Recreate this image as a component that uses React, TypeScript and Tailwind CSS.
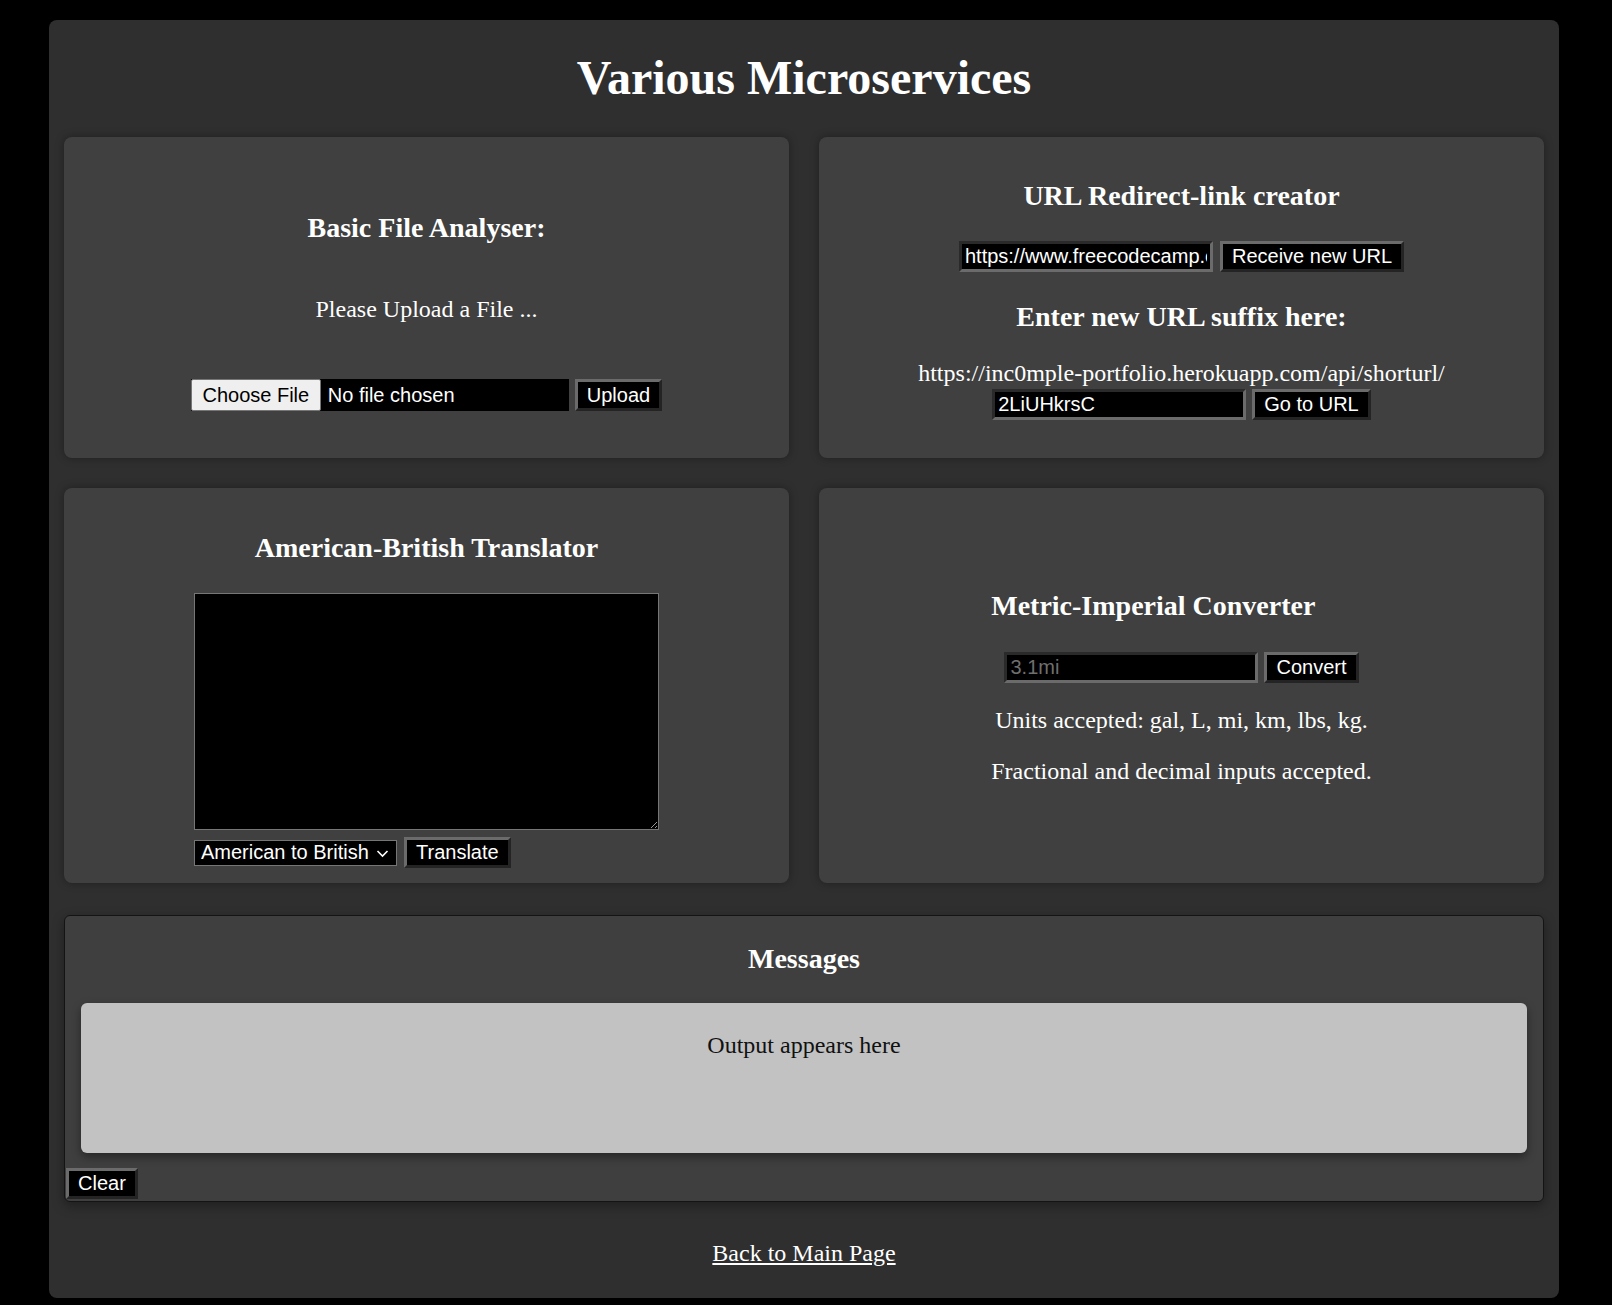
import React from "react";

const sans = "font-['Liberation_Sans',Arial,sans-serif]";
const btn =
  "font-['Liberation_Sans',Arial,sans-serif] text-[20px] leading-[23px] text-white bg-black px-[9px] py-px border-[3px] border-solid border-t-[#6b6b6b] border-l-[#6b6b6b] border-b-[#242424] border-r-[#242424] whitespace-nowrap";
const input =
  "font-['Liberation_Sans',Arial,sans-serif] text-[20px] leading-[23px] text-white bg-black h-[31px] w-[254px] px-[3px] border-[3px] border-solid border-t-[#2a2a2a] border-l-[#2a2a2a] border-b-[#6b6b6b] border-r-[#6b6b6b] outline-none placeholder:text-[#6f6f6f]";
const card = "rounded-[8px] bg-[#404040] shadow-[0_0_8px_rgba(0,0,0,0.35)] flex flex-col items-center";
const h3 = "text-[28px] leading-[32px] font-bold text-white";
const p = "text-[24px] leading-[28px] text-white";

export default function App() {
  return (
    <div className="min-h-screen bg-black pt-[20px] pb-[8px] font-['Liberation_Serif','Times_New_Roman',serif] text-white">
      <div className="ml-[49px] w-[1510px] rounded-[8px] bg-[#2f2f2f] px-[15px] pt-[30px] pb-[30px]">
        <h1 className="text-center text-[48px] leading-[56px] font-bold">Various Microservices</h1>

        <div className="mt-[31px] grid grid-cols-2 gap-x-[30px] gap-y-[30px]">
          {/* File analyser */}
          <div className={`${card} pt-[75px]`}>
            <h3 className={h3}>Basic File Analyser:</h3>
            <p className={`${p} mt-[51px]`}>Please Upload a File ...</p>
            <div className="mt-[56px] flex items-start gap-[6px]">
              <div className="flex h-[32px] w-[378px] items-center bg-black">
                <div className={`${sans} flex h-[32px] w-[130px] items-center justify-center rounded-[2px] border border-[#767676] bg-[#efefef] text-[20px] leading-[23px] text-black`}>
                  Choose File
                </div>
                <span className={`${sans} ml-[7px] text-[20px] leading-[23px] text-white`}>No file chosen</span>
              </div>
              <button className={`${btn} h-[32px]`}>Upload</button>
            </div>
          </div>

          {/* URL shortener */}
          <div className={`${card} pt-[43px] pb-[38px]`}>
            <h3 className={h3}>URL Redirect-link creator</h3>
            <div className="mt-[29px] flex items-center gap-[7px]">
              <input className={input} defaultValue="https://www.freecodecamp.org/" readOnly />
              <button className={btn}>Receive new URL</button>
            </div>
            <h3 className={`${h3} mt-[29px]`}>Enter new URL suffix here:</h3>
            <p className={`${p} mt-[26px]`}>https://inc0mple-portfolio.herokuapp.com/api/shorturl/</p>
            <div className="mt-[2px] flex items-center gap-[6px]">
              <input className={input} defaultValue="2LiUHkrsC" readOnly />
              <button className={btn}>Go to URL</button>
            </div>
          </div>

          {/* Translator */}
          <div className={`${card} pt-[44px] pb-[15px]`}>
            <h3 className={h3}>American-British Translator</h3>
            <div className="mt-[29px] flex w-[465px] flex-col items-start">
              <textarea className="block h-[237px] w-[465px] border border-[#767676] bg-black text-white outline-none" />
              <div className="mt-[7px] flex items-center gap-[7px]">
                <div className="relative">
                  <select
                    className={`${sans} block h-[26px] w-[203px] appearance-none border border-[#767676] bg-black pl-[6px] text-[20px] leading-[23px] text-white outline-none`}
                    defaultValue="a2b"
                  >
                    <option value="a2b">American to British</option>
                    <option value="b2a">British to American</option>
                  </select>
                  <svg className="pointer-events-none absolute right-[8px] top-[9px]" width="13" height="9" viewBox="0 0 13 9">
                    <polyline points="1.5,2 6.5,7 11.5,2" fill="none" stroke="#ffffff" strokeWidth="1.6" />
                  </svg>
                </div>
                <button className={btn}>Translate</button>
              </div>
            </div>
          </div>

          {/* Converter */}
          <div className={`${card} justify-center pt-[4px]`}>
            <div className="flex w-fit flex-col items-center">
              <h3 className={`${h3} self-start`}>Metric-Imperial Converter</h3>
              <div className="mt-[30px] flex items-center gap-[6px]">
                <input className={input} placeholder="3.1mi" />
                <button className={btn}>Convert</button>
              </div>
              <p className={`${p} mt-[23px]`}>Units accepted: gal, L, mi, km, lbs, kg.</p>
              <p className={`${p} mt-[23px]`}>Fractional and decimal inputs accepted.</p>
            </div>
          </div>
        </div>

        {/* Messages */}
        <div className="mt-[32px] rounded-[6px] border border-[#141414] bg-[#3f3f3f] shadow-[0_4px_12px_rgba(0,0,0,0.35)]">
          <h3 className={`${h3} mt-[27px] text-center`}>Messages</h3>
          <div className="mx-[16px] mt-[28px] h-[150px] rounded-[6px] bg-[#c2c2c2] pt-[28px] text-center shadow-[0_4px_10px_rgba(0,0,0,0.4)]">
            <p className="text-[24px] leading-[28px] text-[#111]">Output appears here</p>
          </div>
          <div className="mt-[15px] mb-[2px] flex">
            <button className={`${btn} ml-px`}>Clear</button>
          </div>
        </div>

        <div className="mt-[37px] text-center">
          <a href="#" className="text-[24px] leading-[28px] text-white underline">
            Back to Main Page
          </a>
        </div>
      </div>
    </div>
  );
}
